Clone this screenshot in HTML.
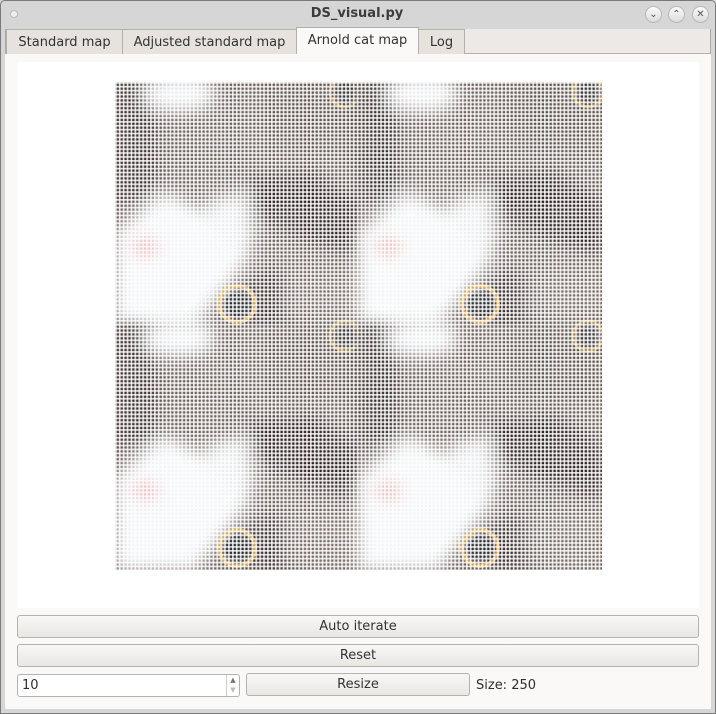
<!DOCTYPE html>
<html><head><style>
*{box-sizing:border-box;margin:0;padding:0}
body{width:716px;height:714px;overflow:hidden;background:#d4d4d4;font-family:"DejaVu Sans","Liberation Sans",sans-serif;font-size:13px;color:#2e2e2e;position:relative}
.win{position:absolute;left:0;top:0;width:716px;height:714px;border:1px solid #7a7a7a;border-radius:5px 5px 0 0;background:#d6d6d6}
.title{position:absolute;left:0;top:0;width:714px;height:28px;text-align:center;line-height:28px;font-weight:bold;font-size:13px;color:#3c3c3c}
.tb{position:absolute;top:6px;width:17px;height:17px;border-radius:50%;border:1px solid #b8b8b8;background:linear-gradient(#fafafa,#dcdcdc);font-size:10px;line-height:15px;text-align:center;color:#555}
.frame{position:absolute;left:5px;top:29px;width:706px;height:680px;background:#ece9e6;border:1px solid #a9a9a9;border-top:none}
.tab{position:absolute;top:29px;height:25px;background:#e6e3df;border:1px solid #b3b0ac;border-bottom:none;line-height:25px;text-align:center;font-size:13px;color:#333}
.tab.act{background:#fbf9f7;top:27px;height:27px}
.panel{position:absolute;left:5px;top:53px;width:706px;height:656px;background:#fbf9f7;border-top:1px solid #b3b0ac}
.white{position:absolute;left:17px;top:62px;width:682px;height:546px;background:#fff}
.btn{position:absolute;height:23px;border:1px solid #b5b2ae;border-radius:3px;background:linear-gradient(#f8f7f6,#e9e7e4);text-align:center;line-height:22px;font-size:13px;color:#333}
</style></head><body>
<div class="win"></div>
<div style="position:absolute;left:10px;top:10px;width:8px;height:8px;border-radius:50%;background:#eee;border:1px solid #bbb"></div>
<div class="title">DS_visual.py</div>
<div class="tb" style="left:645px">&#8964;</div>
<div class="tb" style="left:668px">&#8963;</div>
<div class="tb" style="left:692px">&#10005;</div>
<div class="frame"></div>
<div class="panel"></div>
<div class="tab" style="left:6px;width:117px">Standard map</div>
<div class="tab" style="left:122px;width:175px">Adjusted standard map</div>
<div class="tab" style="left:418px;width:47px">Log</div>
<div class="tab act" style="left:296px;width:123px">Arnold cat map</div>
<div class="white"></div>
<svg style="position:absolute;left:115px;top:82px" width="487" height="488" viewBox="0 0 487 488">
<defs>
<filter id="b" x="-20%" y="-20%" width="140%" height="140%"><feGaussianBlur stdDeviation="8"/></filter>
<pattern id="g" width="3.9" height="3.9" patternUnits="userSpaceOnUse">
<rect x="0" y="0" width="3.9" height="1.7" fill="#fff" opacity="0.8"/>
<rect x="0" y="0" width="1.7" height="3.9" fill="#fff" opacity="0.8"/>
</pattern>
<g id="t">
<rect width="244" height="244" fill="#6e625e"/>
<g filter="url(#b)">
<rect x="0" y="0" width="40" height="120" fill="#3a302e"/>
<ellipse cx="65" cy="12" rx="35" ry="18" fill="#eef0f2"/>
<polygon points="0,150 50,110 130,150 135,175 80,244 0,244" fill="#f2f4f6"/>
<polygon points="90,120 130,110 140,160 110,170" fill="#e8eaec"/>
<polygon points="130,95 200,90 244,120 244,175 200,160 140,135" fill="#2e2220"/>
<rect x="150" y="0" width="94" height="70" fill="#5e524e"/>
<ellipse cx="160" cy="220" rx="40" ry="30" fill="#3e3230"/>
<ellipse cx="30" cy="165" rx="14" ry="10" fill="#e8a0a0"/>
<rect x="170" y="185" width="74" height="55" fill="#7a6e6a"/>
</g>
<circle cx="122" cy="222" r="18" fill="none" stroke="#e8b050" stroke-width="4" opacity="0.85"/>
<circle cx="122" cy="222" r="12" fill="#20262a" opacity="0.8"/>
<circle cx="230" cy="10" r="15" fill="none" stroke="#d8b050" stroke-width="3" opacity="0.7"/>
<circle cx="230" cy="10" r="9" fill="#202428" opacity="0.6"/>
</g>
</defs>
<use href="#t" x="0" y="0"/><use href="#t" x="243" y="0"/>
<use href="#t" x="0" y="244"/><use href="#t" x="243" y="244"/>
<rect width="487" height="488" fill="url(#g)"/>
</svg>
<div class="btn" style="left:17px;top:615px;width:682px">Auto iterate</div>
<div class="btn" style="left:17px;top:644px;width:682px">Reset</div>
<div style="position:absolute;left:17px;top:674px;width:223px;height:23px;background:#fff;border:1px solid #b5b2ae;border-radius:3px;line-height:22px;padding-left:4px">10</div>
<div style="position:absolute;left:226px;top:675px;width:13px;height:21px;border-left:1px solid #ccc;font-size:7px;line-height:10px;text-align:center;color:#777">&#9650;<br><span style="color:#bbb">&#9660;</span></div>
<div class="btn" style="left:246px;top:673px;width:224px">Resize</div>
<div style="position:absolute;left:476px;top:674px;line-height:23px">Size: 250</div>
</body></html>
